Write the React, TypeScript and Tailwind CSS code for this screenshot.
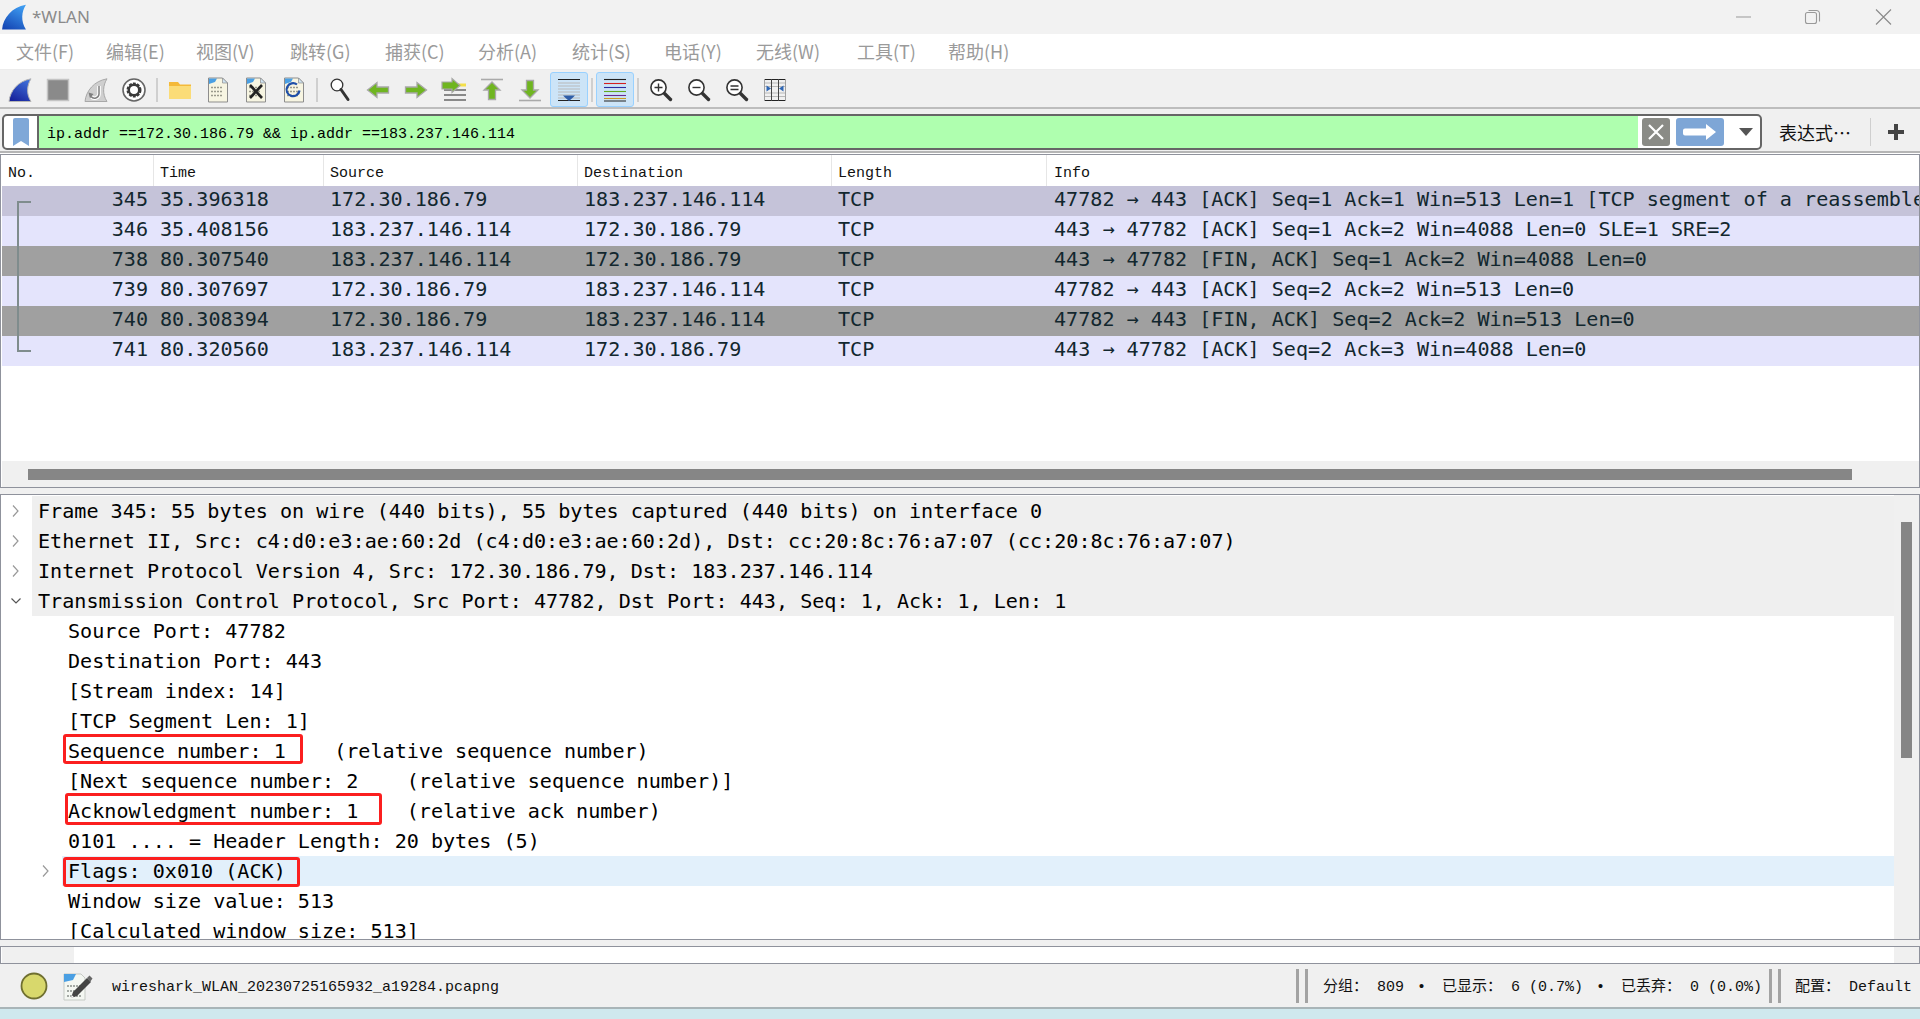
import React from "react";

const mono = "font-['DejaVu_Sans_Mono',monospace]";
const simsun = "font-['Liberation_Mono','Noto_Sans_CJK_SC',monospace]";

const Fin = ({ id, size = 24, from = "#4a8fe8", to = "#17309c", stroke = "none" }: { id: string; size?: number; from?: string; to?: string; stroke?: string }) => (
  <svg width={size} height={size} viewBox="0 0 24 24">
    <defs>
      <linearGradient id={id} x1="0.7" y1="0" x2="0.2" y2="1">
        <stop offset="0" stopColor={from} />
        <stop offset="1" stopColor={to} />
      </linearGradient>
    </defs>
    <path d="M1 23.5C2 13 10 3 23 .8 19 7 18 16 23 23.5Z" fill={`url(#${id})`} stroke={stroke} strokeWidth="1" />
  </svg>
);

const Stop = () => (
  <svg width="24" height="24" viewBox="0 0 24 24">
    <rect x="1.500" y="1.500" width="21" height="21" fill="#8a8a8a" stroke="#c4c4c4" strokeWidth="1.500" />
  </svg>
);

const Restart = () => (
  <svg width="24" height="24" viewBox="0 0 24 24">
    <path d="M1 23.500C2 13 10 3 23 .8 19 7 18 16 23 23.500Z" fill="#cfcfcf" stroke="#a8a8a8" strokeWidth="1" />
    <path d="M15 8v8a4.500 4.500 0 0 1-8 2.500" fill="none" stroke="#fff" strokeWidth="3.600" />
    <path d="M15 8v8a4.500 4.500 0 0 1-8 2.500" fill="none" stroke="#7f7f7f" strokeWidth="1.500" />
    <path d="M4.500 14.500l5 1.500-3.500 4.500Z" fill="#7f7f7f" />
  </svg>
);

const Gear = () => (
  <svg width="24" height="24" viewBox="0 0 24 24">
    <circle cx="12" cy="12" r="11" fill="#fff" stroke="#666" strokeWidth="1.600" />
    <circle cx="12" cy="12" r="6" fill="none" stroke="#3a3a3a" strokeWidth="3" strokeDasharray="2.600 1.200" />
    <circle cx="12" cy="12" r="5.200" fill="none" stroke="#3a3a3a" strokeWidth="2.400" />
  </svg>
);

const Folder = () => (
  <svg width="24" height="24" viewBox="0 0 24 24">
    <path d="M1 4h9l2 2.500h11V21H1Z" fill="#f4b93a" />
    <path d="M1 8h22v13H1Z" fill="#fbdc78" />
  </svg>
);

const Dots = () => (
  <g stroke="#9a9a8c" strokeWidth="1.600" strokeDasharray="2 1">
    <path d="M5 10.500h12M5 14.500h12M5 18.500h12" fill="none" />
  </g>
);

const FileBase = ({ children }: { children?: React.ReactNode }) => (
  <svg width="24" height="26" viewBox="0 0 24 26">
    <path d="M2.500 1h14l5 5v19h-19Z" fill="#f7f5e2" stroke="#8d8d8d" strokeWidth="1" />
    <path d="M3 1.500h8l-2 3.500-6 2Z" fill="#4a9fe3" />
    <path d="M16.500 1v5h5Z" fill="#cfe3f2" stroke="#8d8d8d" strokeWidth=".7" />
    <Dots />
    {children}
  </svg>
);

const Find = () => (
  <svg width="24" height="26" viewBox="0 0 24 26">
    <circle cx="9" cy="8" r="5.800" fill="#fff" stroke="#333" strokeWidth="1.300" />
    <path d="M13 12.500l7 10" stroke="#333" strokeWidth="3" strokeLinecap="round" />
  </svg>
);

const Magnifier = ({ mark }: { mark?: "plus" | "minus" | "eq" }) => (
  <svg width="24" height="24" viewBox="0 0 24 24">
    <circle cx="9.500" cy="9.500" r="7.600" fill="#fff" stroke="#333" strokeWidth="1.600" />
    <path d="M15.500 15.500l6 6" stroke="#333" strokeWidth="3.400" strokeLinecap="round" />
    {mark === "plus" && <path d="M5.500 9.500h8M9.500 5.500v8" stroke="#333" strokeWidth="1.400" />}
    {mark === "minus" && <path d="M5.500 9.500h8" stroke="#333" strokeWidth="1.400" />}
    {mark === "eq" && <path d="M5.500 8h8M5.500 11.500h8" stroke="#333" strokeWidth="1.400" />}
  </svg>
);

const green = "#6fb520";
const ArrowL = () => (
  <svg width="24" height="24" viewBox="0 0 24 24">
    <path d="M1.500 12L11 4.500v4.500h11.500v6H11v4.500Z" fill={green} stroke="#a8a8a8" strokeWidth="1.300" />
  </svg>
);
const ArrowR = () => (
  <svg width="24" height="24" viewBox="0 0 24 24">
    <path d="M22.500 12L13 4.500v4.500H1.500v6H13v4.500Z" fill={green} stroke="#a8a8a8" strokeWidth="1.300" />
  </svg>
);
const GoTo = () => (
  <svg width="26" height="26" viewBox="0 0 26 26">
    <path d="M3 8h22M3 13h22M3 18h22M3 23h22" stroke="#222" strokeWidth="1.200" />
    <rect x="17" y="6.500" width="8" height="3" fill="#f4e04a" />
    <path d="M19 8.500L11 1.500v3.500H1v7h10v3.500Z" fill={green} stroke="#a8a8a8" strokeWidth="1.200" />
  </svg>
);
const ArrowTop = () => (
  <svg width="24" height="24" viewBox="0 0 24 24">
    <path d="M1 1.500h22" stroke="#aaa" strokeWidth="1.600" />
    <path d="M12 4L4 12h4.500v9.500h7V12H20Z" fill={green} stroke="#a8a8a8" strokeWidth="1.300" />
  </svg>
);
const ArrowBottom = () => (
  <svg width="24" height="24" viewBox="0 0 24 24">
    <path d="M1 22.500h22" stroke="#aaa" strokeWidth="1.600" />
    <path d="M12 20L4 12h4.500V2.500h7V12H20Z" fill={green} stroke="#a8a8a8" strokeWidth="1.300" />
  </svg>
);
const AutoScroll = () => (
  <svg width="24" height="24" viewBox="0 0 24 24">
    <path d="M1 1.500h22M1 22.500h22" stroke="#222" strokeWidth="1.100" />
    <path d="M1 5h22M1 8h22M1 11h22M1 14h22M1 17h22M1 20h22" stroke="#b8b8b8" strokeWidth="1" />
    <path d="M6 17.500h12l-2 2-4 3.500-4-3.500Z" fill="#2f5ea8" />
  </svg>
);
const Colorize = () => (
  <svg width="24" height="24" viewBox="0 0 24 24">
    <path d="M1 1.500h22" stroke="#222" strokeWidth="1.100" />
    <path d="M1 5.500h22" stroke="#d42020" strokeWidth="1.100" />
    <path d="M1 9.500h22" stroke="#2a2aa0" strokeWidth="1.100" />
    <path d="M1 13.500h22" stroke="#62a820" strokeWidth="1.100" />
    <path d="M1 17.500h22" stroke="#6a2a90" strokeWidth="1.100" />
    <path d="M1 20.500h22" stroke="#c89a20" strokeWidth="1.100" />
    <path d="M1 23h22" stroke="#333" strokeWidth="1.100" />
  </svg>
);
const Resize = () => (
  <svg width="24" height="24" viewBox="0 0 24 24">
    <path d="M1 1.500h22M1 22.500h22" stroke="#222" strokeWidth="1.100" />
    <path d="M1 5h22M1 8.500h22M1 15h22M1 18.500h22" stroke="#b8b8b8" strokeWidth="1" />
    <path d="M1.500 1v22M22.500 1v22" stroke="#a0a0a0" strokeWidth="1" />
    <path d="M8.500 1v22M15.500 1v22" stroke="#444" strokeWidth="1" />
    <path d="M3.500 7.500l4.500 3-4.500 3ZM20.500 7.500l-4.500 3 4.500 3Z" fill="#2f66b4" />
  </svg>
);

const Tool = ({ children, active }: { children: React.ReactNode; active?: boolean }) => (
  <div
    className={
      "flex h-[35px] w-[38px] shrink-0 items-center justify-center rounded-[3px] border " +
      (active ? "border-[#99d1ff] bg-[#cce4f7]" : "border-transparent")
    }
  >
    {children}
  </div>
);
const Sep = () => (
  <div className="flex h-full w-[8px] shrink-0 items-center justify-center">
    <div className="h-[24px] w-[2px] bg-[#cfcfcf]" />
  </div>
);

const menus = [
  ["文件(F)", "w-[90px]"],
  ["编辑(E)", "w-[90px]"],
  ["视图(V)", "w-[94px]"],
  ["跳转(G)", "w-[95px]"],
  ["捕获(C)", "w-[93px]"],
  ["分析(A)", "w-[94px]"],
  ["统计(S)", "w-[92px]"],
  ["电话(Y)", "w-[92px]"],
  ["无线(W)", "w-[101px]"],
  ["工具(T)", "w-[91px]"],
  ["帮助(H)", "w-[80px]"],
];

const columns = [
  ["No.", "w-[152px] pl-[6px]"],
  ["Time", "w-[170px] pl-[6px]"],
  ["Source", "w-[254px] pl-[6px]"],
  ["Destination", "w-[254px] pl-[6px]"],
  ["Length", "w-[215px] pl-[6px]"],
  ["Info", "flex-1 pl-[7px]"],
];

const A = "172.30.186.79";
const B = "183.237.146.114";
const packets = [
  { no: 345, t: "35.396318", s: A, d: B, info: "47782 → 443 [ACK] Seq=1 Ack=1 Win=513 Len=1 [TCP segment of a reassembled PDU]", bg: "bg-[#c5c3d9]" },
  { no: 346, t: "35.408156", s: B, d: A, info: "443 → 47782 [ACK] Seq=1 Ack=2 Win=4088 Len=0 SLE=1 SRE=2", bg: "bg-[#e4e4fc]" },
  { no: 738, t: "80.307540", s: B, d: A, info: "443 → 47782 [FIN, ACK] Seq=1 Ack=2 Win=4088 Len=0", bg: "bg-[#a0a0a0]" },
  { no: 739, t: "80.307697", s: A, d: B, info: "47782 → 443 [ACK] Seq=2 Ack=2 Win=513 Len=0", bg: "bg-[#e4e4fc]" },
  { no: 740, t: "80.308394", s: A, d: B, info: "47782 → 443 [FIN, ACK] Seq=2 Ack=2 Win=513 Len=0", bg: "bg-[#a0a0a0]" },
  { no: 741, t: "80.320560", s: B, d: A, info: "443 → 47782 [ACK] Seq=2 Ack=3 Win=4088 Len=0", bg: "bg-[#e4e4fc]" },
];

const details: { text: string; level: 0 | 1; open?: boolean; closed?: boolean; hl?: boolean }[] = [
  { text: "Frame 345: 55 bytes on wire (440 bits), 55 bytes captured (440 bits) on interface 0", level: 0, closed: true },
  { text: "Ethernet II, Src: c4:d0:e3:ae:60:2d (c4:d0:e3:ae:60:2d), Dst: cc:20:8c:76:a7:07 (cc:20:8c:76:a7:07)", level: 0, closed: true },
  { text: "Internet Protocol Version 4, Src: 172.30.186.79, Dst: 183.237.146.114", level: 0, closed: true },
  { text: "Transmission Control Protocol, Src Port: 47782, Dst Port: 443, Seq: 1, Ack: 1, Len: 1", level: 0, open: true },
  { text: "Source Port: 47782", level: 1 },
  { text: "Destination Port: 443", level: 1 },
  { text: "[Stream index: 14]", level: 1 },
  { text: "[TCP Segment Len: 1]", level: 1 },
  { text: "Sequence number: 1    (relative sequence number)", level: 1 },
  { text: "[Next sequence number: 2    (relative sequence number)]", level: 1 },
  { text: "Acknowledgment number: 1    (relative ack number)", level: 1 },
  { text: "0101 .... = Header Length: 20 bytes (5)", level: 1 },
  { text: "Flags: 0x010 (ACK)", level: 1, closed: true, hl: true },
  { text: "Window size value: 513", level: 1 },
  { text: "[Calculated window size: 513]", level: 1 },
];

const Chevron = ({ open, dark }: { open?: boolean; dark?: boolean }) => (
  <svg width="12" height="14" viewBox="0 0 12 14" className="shrink-0">
    {open ? (
      <path d="M1.500 4.500L6 9l4.500-4.500" fill="none" stroke={dark ? "#555" : "#888"} strokeWidth="1.200" />
    ) : (
      <path d="M3 1.500L8 7l-5 5.500" fill="none" stroke="#999" strokeWidth="1.200" />
    )}
  </svg>
);

const RedBox = ({ className }: { className: string }) => (
  <div className={"pointer-events-none absolute rounded-[3px] border-[3px] border-[#fb1f1f] " + className} />
);

const Bullet = () => <span className="mr-[16px] ml-[13px]">•</span>;

export default function App() {
  return (
    <div className="flex h-[1019px] w-full flex-col overflow-hidden bg-[#f0f0f0]">
      {/* Title bar */}
      <div className="flex h-[34px] shrink-0 items-center bg-[#f2f2f2]">
        <div className="ml-[1px] w-[31px]">
          <Fin id="logo" size={26} from="#3d9bf0" to="#1546b4" />
        </div>
        <span className="font-['Noto_Sans',sans-serif] text-[17px] text-[#8a8a8a]">*WLAN</span>
        <div className="ml-auto flex items-center">
          <svg width="70" height="18" viewBox="0 0 70 18"><path d="M2 9h15" stroke="#999" strokeWidth="1" /></svg>
          <svg width="71" height="18" viewBox="0 0 71 18" fill="none" stroke="#999" strokeWidth="1.100">
            <rect x="1.500" y="4.500" width="11" height="11" rx="2" />
            <path d="M4.500 2.500h8a3 3 0 0 1 3 3v8" />
          </svg>
          <svg width="44" height="18" viewBox="0 0 44 18" className="mr-[1px]"><path d="M1 1.500l15 15M16 1.500l-15 15" stroke="#8a8a8a" strokeWidth="1.100" /></svg>
        </div>
      </div>

      {/* Menu */}
      <div className="flex h-[36px] shrink-0 items-center border-b border-[#ececec] bg-white pl-[16px] font-['Noto_Sans_CJK_SC',sans-serif] text-[18px] text-[#9a9a9a]">
        {menus.map(([m, w]) => (
          <span key={m} className={"shrink-0 " + w}>{m}</span>
        ))}
      </div>

      {/* Toolbar */}
      <div className="flex h-[39px] shrink-0 items-center border-b-2 border-[#bdbdbd] bg-[#f0f0f0] pt-[2px] pl-[1px]">
        <Tool><Fin id="t1" from="#3f6fd8" to="#16209a" stroke="#b5b5b5" /></Tool>
        <Tool><Stop /></Tool>
        <Tool><Restart /></Tool>
        <Tool><Gear /></Tool>
        <Sep />
        <Tool><Folder /></Tool>
        <Tool><FileBase /></Tool>
        <Tool>
          <FileBase><path d="M6 8l12 13M18 8L6 21" stroke="#222" strokeWidth="2.600" /></FileBase>
        </Tool>
        <Tool>
          <FileBase><path d="M15 7.500a6.500 6.500 0 1 0 2.500 6" fill="none" stroke="#1f4fa8" strokeWidth="2.200" /></FileBase>
        </Tool>
        <Sep />
        <Tool><Find /></Tool>
        <Tool><ArrowL /></Tool>
        <Tool><ArrowR /></Tool>
        <Tool><GoTo /></Tool>
        <Tool><ArrowTop /></Tool>
        <Tool><ArrowBottom /></Tool>
        <div className="w-[1px]" />
        <Tool active><AutoScroll /></Tool>
        <Sep />
        <Tool active><Colorize /></Tool>
        <Sep />
        <Tool><Magnifier mark="plus" /></Tool>
        <Tool><Magnifier mark="minus" /></Tool>
        <Tool><Magnifier mark="eq" /></Tool>
        <Tool><Resize /></Tool>
      </div>

      {/* Filter */}
      <div className="flex h-[44px] shrink-0 items-center border-b-2 border-[#b5b5b5] pt-[4px] pl-[2px]">
        <div className="flex h-[36px] w-[1760px] shrink-0 items-stretch overflow-hidden rounded-[5px] border-2 border-[#666] bg-white">
          <div className="flex w-[33px] shrink-0 items-center justify-center">
            <svg width="16" height="28" viewBox="0 0 16 28"><path d="M0 2a2 2 0 0 1 2-2h12a2 2 0 0 1 2 2v26l-8-5-8 5Z" fill="#7fa8d8" /></svg>
          </div>
          <div className="w-[2px] shrink-0 bg-[#666]" />
          <div className={"flex w-[1599px] shrink-0 items-center bg-[#afffaf] pt-[6px] pl-[8px] text-[15px] text-black " + simsun}>
            <span className="whitespace-pre">ip.addr ==172.30.186.79 &amp;&amp; ip.addr ==183.237.146.114</span>
          </div>
          <div className="flex flex-1 items-center pl-[4px]">
            <div className="flex h-[28px] w-[28px] items-center justify-center rounded-[3px] bg-[#8a8b86]">
              <svg width="20" height="20" viewBox="0 0 20 20"><path d="M3 3l14 14M17 3L3 17" stroke="#fff" strokeWidth="2.200" /></svg>
            </div>
            <div className="ml-[6px] flex h-[28px] w-[48px] items-center justify-center rounded-[3px] bg-[#7ea6d6]">
              <svg width="34" height="16" viewBox="0 0 34 16"><path d="M2 4.500h21V0l10 8-10 8v-4.500H2a2 2 0 0 1-2-2v-3a2 2 0 0 1 2-2Z" fill="#fff" /></svg>
            </div>
            <svg width="14" height="8" viewBox="0 0 14 8" className="ml-[15px]"><path d="M0 0h14L7 8Z" fill="#555" /></svg>
          </div>
        </div>
        <span className="ml-[17px] shrink-0 font-['Noto_Sans_CJK_SC',sans-serif] text-[18px] text-[#111]">表达式…</span>
        <div className="ml-[19px] h-[28px] w-[1px] bg-[#cfcfcf]" />
        <svg width="16" height="16" viewBox="0 0 16 16" className="ml-[17px]"><path d="M8 0v16M0 8h16" stroke="#444" strokeWidth="4" /></svg>
      </div>

      <div className="h-[1px] shrink-0 bg-white" />

      {/* Packet list */}
      <div className="relative flex h-[334px] shrink-0 flex-col overflow-hidden border border-[#8f929c] bg-white pl-[1px]">
        <div className={"flex h-[31px] shrink-0 items-center text-[15px] text-[#111] " + simsun}>
          {columns.map(([c, w], i) => (
            <div key={c} className={"flex h-full shrink-0 items-center pt-[7px] " + w + (i < 5 ? " border-r border-[#e6e6e6]" : "")}>{c}</div>
          ))}
        </div>
        {packets.map((p) => (
          <div key={p.no} className={"flex h-[30px] shrink-0 items-center whitespace-pre pb-[4px] text-[20.100px] leading-[26px] text-[#12272e] " + mono + " " + p.bg}>
            <div className="w-[152px] shrink-0 pr-[6px] text-right">{p.no}</div>
            <div className="w-[170px] shrink-0 pl-[6px]">{p.t}</div>
            <div className="w-[254px] shrink-0 pl-[6px]">{p.s}</div>
            <div className="w-[254px] shrink-0 pl-[6px]">{p.d}</div>
            <div className="w-[215px] shrink-0 pl-[6px]">TCP</div>
            <div className="min-w-0 flex-1 overflow-hidden pl-[7px]">{p.info}</div>
          </div>
        ))}
        <div className="flex-1" />
        <div className="flex h-[26px] shrink-0 items-center bg-[#f0f0f0] pl-[26px]">
          <div className="h-[11px] w-[1824px] bg-[#868686]" />
        </div>
        {/* Conversation bracket */}
        <div className="absolute top-[46px] left-[16px] h-[151px] w-[14px] border-y-2 border-l-2 border-[#7f8c8d]" />
      </div>

      <div className="h-[6px] shrink-0" />

      {/* Details */}
      <div className="relative flex h-[446px] shrink-0 overflow-hidden border border-[#8f929c] bg-white">
        <div className="flex min-w-0 flex-1 flex-col pt-[1px]">
          {details.map((d) => (
            <div
              key={d.text}
              className={
                "flex h-[30px] shrink-0 items-center whitespace-pre text-[20.100px] leading-[30px] text-black " + mono + " " + (d.level === 0 ? "pl-[9px]" : "pl-[39px]")
              }
            >
              <div className="flex w-[22px] shrink-0 items-center">
                {d.closed && <Chevron />}
                {d.open && <Chevron open dark />}
              </div>
              <div className={"flex h-full min-w-0 flex-1 items-center pl-[6px] " + (d.level === 0 ? "bg-[#efefef]" : d.hl ? "bg-[#e2f0fb]" : "")}>
                {d.text}
              </div>
            </div>
          ))}
        </div>
        <div className="flex w-[25px] shrink-0 justify-center bg-[#f0f0f0] pt-[27px]">
          <div className="h-[236px] w-[11px] bg-[#868686]" />
        </div>
        <RedBox className="top-[239px] left-[62px] h-[30px] w-[240px]" />
        <RedBox className="top-[298px] left-[64px] h-[32px] w-[317px]" />
        <RedBox className="top-[362px] left-[62px] h-[30px] w-[237px]" />
      </div>

      <div className="h-[6px] shrink-0" />

      {/* Bytes pane */}
      <div className="flex h-[18px] shrink-0 items-stretch justify-between border border-[#8f929c] bg-white pl-[1px]">
        <div className="w-[72px] bg-[#f0f0f0]" />
        <div className="flex w-[25px] flex-col justify-between bg-[#f0f0f0]">
          <div className="h-[6px]" />
        </div>
      </div>

      {/* Status bar */}
      <div className={"flex h-[45px] shrink-0 items-center border-b-2 border-[#a9b5b8] bg-[#f0f0f0] text-[15px] text-[#111] " + simsun}>
        <svg width="28" height="28" viewBox="0 0 28 28" className="ml-[20px] shrink-0">
          <circle cx="14" cy="14" r="12.500" fill="#d8d86c" stroke="#6f6f30" strokeWidth="1.800" />
        </svg>
        <svg width="30" height="30" viewBox="0 0 30 30" className="ml-[15px] shrink-0">
          <path d="M1 3h17l4 4v22H1Z" fill="#f4f7f2" stroke="#c5c9c4" strokeWidth="1" />
          <path d="M1 3h12l-3 6-9 2Z" fill="#4a9fe3" />
          <path d="M4 15h14M4 20h14M4 25h14" stroke="#a5aaa5" strokeWidth="2" strokeDasharray="2 1" />
          <path d="M10 21l-2 6 6-2 14-14-4-4Z" fill="#444" />
          <path d="M24 7l2.500-2.500 3 3L27 11Z" fill="#666" />
          <path d="M8 27l.8-3 2.200 2.200Z" fill="#fff" />
        </svg>
        <span className="ml-[19px] whitespace-pre pt-[6px]">wireshark_WLAN_20230725165932_a19284.pcapng</span>
        <div className="ml-auto flex items-center">
          <div className="flex h-[34px] gap-[6px]">
            <div className="w-[3px] bg-[#a3a3a3]" />
            <div className="w-[3px] bg-[#a3a3a3]" />
          </div>
          <span className="ml-[15px] whitespace-pre pt-[6px]">
            分组： 809<Bullet />已显示： 6 (0.7%)<Bullet />已丢弃： 0 (0.0%)
          </span>
          <div className="ml-[7px] flex h-[34px] gap-[6px]">
            <div className="w-[3px] bg-[#a3a3a3]" />
            <div className="w-[3px] bg-[#a3a3a3]" />
          </div>
          <span className="mr-[8px] ml-[14px] whitespace-pre pt-[6px]">配置： Default</span>
        </div>
      </div>

      <div className="flex-1 bg-[#cfe8ee]" />
    </div>
  );
}
